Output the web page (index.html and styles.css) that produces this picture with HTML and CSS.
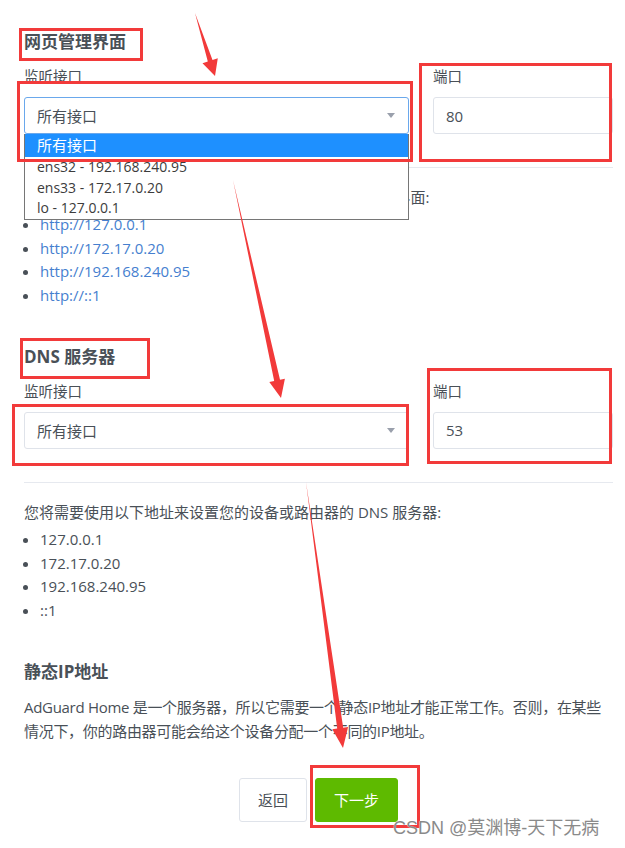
FILE: index.html
```html
<!DOCTYPE html>
<html>
<head>
	<meta charset="utf-8">
	<title>AdGuard Home 设置</title>
	<link rel="stylesheet" href="styles.css">
</head>
<body>
<div class="page">

	<section class="block">
		<h2>网页管理界面</h2>
		<div class="fields">
			<div class="field">
				<div class="label">监听接口</div>
				<div class="select-wrap">
					<div class="select focused"><span>所有接口</span><i class="caret"></i></div>
					<ul class="options">
						<li class="active">所有接口</li>
						<li>ens32 - 192.168.240.95</li>
						<li>ens33 - 172.17.0.20</li>
						<li>lo - 127.0.0.1</li>
					</ul>
				</div>
			</div>
			<div class="field">
				<div class="label">端口</div>
				<div class="input">80</div>
			</div>
		</div>
		<hr>
		<p>您可以通过以下地址来访问 AdGuard Home 的网页管理界面:</p>
		<ul class="addr links">
			<li><a href="javascript:;">http://127.0.0.1</a></li>
			<li><a href="javascript:;">http://172.17.0.20</a></li>
			<li><a href="javascript:;">http://192.168.240.95</a></li>
			<li><a href="javascript:;">http://::1</a></li>
		</ul>
	</section>

	<section class="block">
		<h2>DNS 服务器</h2>
		<div class="fields">
			<div class="field">
				<div class="label">监听接口</div>
				<div class="select"><span>所有接口</span><i class="caret"></i></div>
			</div>
			<div class="field">
				<div class="label">端口</div>
				<div class="input">53</div>
			</div>
		</div>
		<hr>
		<p>您将需要使用以下地址来设置您的设备或路由器的 DNS 服务器:</p>
		<ul class="addr">
			<li>127.0.0.1</li>
			<li>172.17.0.20</li>
			<li>192.168.240.95</li>
			<li>::1</li>
		</ul>
	</section>

	<section class="block">
		<h2>静态IP地址</h2>
		<p class="note">AdGuard Home 是一个服务器，所以它需要一个静态IP地址才能正常工作。否则，在某些<br>情况下，你的路由器可能会给这个设备分配一个不同的IP地址。</p>
	</section>

	<div class="actions">
		<button class="btn">返回</button>
		<button class="btn btn-green">下一步</button>
	</div>

	<!-- 截图上的红框和箭头标注 -->
	<svg class="marks" width="625" height="848" viewBox="0 0 625 848">
		<g fill="none" stroke="#f23a3a" stroke-width="3">
			<rect x="20.5" y="29.5" width="121" height="30"/>
			<rect x="18.5" y="82.5" width="393" height="78"/>
			<rect x="420.5" y="64.5" width="190" height="96"/>
			<rect x="21.5" y="339.5" width="127" height="38"/>
			<rect x="13.5" y="405.5" width="394" height="59"/>
			<rect x="428.5" y="369.5" width="182" height="93"/>
			<rect x="311.5" y="766.5" width="107" height="60"/>
		</g>
		<g fill="#f23a3a">
			<polygon points="195,13 207.8,61.5 202.5,63.2 215,76 217.8,58.3 212.5,60"/>
			<polygon points="233,180 274.2,381 269.3,382.1 281,398 284.9,378.7 280,379.8"/>
			<polygon points="306,482 337.2,728.6 332.3,729.3 343,748 348.1,727.1 343.2,727.8"/>
		</g>
	</svg>

	<div class="watermark">CSDN @莫渊博-天下无病</div>
</div>
</body>
</html>
```

FILE: styles.css
```css
*{ box-sizing: border-box; }
body{
	margin: 0;
	font-family: "Open Sans", "Noto Sans CJK SC", sans-serif;
	font-size: 15px;
	color: #495057;
	background: #fff;
}
.page{
	position: relative; /*标注层定位*/
	width: 625px; height: 848px;
	overflow: hidden;
	padding: 30px 12px 0 24px;
}
h2{
	margin: 0 0 11px;
	font-size: 17px; line-height: 24px;
	font-weight: 700;
}
.fields{
	display: grid;
	grid-template-columns: 385px 1fr;
	gap: 24px;
}
.label{
	font-size: 14.5px; line-height: 24px;
	margin-bottom: 8px;
}
.select, .input{
	display: flex; align-items: center;
	height: 37px;
	padding: 0 13px 0 12px;
	border: 1px solid #dfe3ea; border-radius: 3px;
	background: #fff;
}
.select{ justify-content: space-between; }
.select.focused{ border-color: #6aa8ec; }
.caret{
	width: 0; height: 0;
	border-left: 4px solid transparent;
	border-right: 4px solid transparent;
	border-top: 5px solid #9aa0ac;
}
.select-wrap{ position: relative; }
.options{
	position: absolute; z-index: 2;
	top: 37px; left: 0; right: 0;
	margin: 0; padding: 0;
	list-style: none;
	background: #fff;
	border: 1px solid #767676; border-top: 0;
}
.options li{
	padding: 0 12px;
	font-size: 14px;
	line-height: 20.5px;
	color: #3c3c3c;
}
.options .active{
	font-size: 15px;
	line-height: 23px;
	background: #1e90ff; color: #fff;
}
hr{
	border: 0; border-top: 1px solid #e6e9ef;
	margin: 33px 0 17px;
}
p{ margin: 0 0 4px; line-height: 24px; }
.addr{
	margin: 0 0 37px;
	padding-left: 16px;
	line-height: 23.7px;
}
.links a{ color: #467fcf; text-decoration: none; }
.note{
	margin-bottom: 35px;
	letter-spacing: -0.3px;
}
.actions{
	display: flex; justify-content: center;
	gap: 8px;
}
.btn{
	height: 44px;
	padding: 0 18px;
	font: inherit;
	color: #495057;
	background: #fff;
	border: 1px solid #dfe3ea; border-radius: 3px;
}
.btn-green{ background: #5eba00; border-color: #5eba00; color: #fff; }
.marks{
	position: absolute; z-index: 5;
	left: 0; top: 0;
}
.watermark{
	position: absolute; z-index: 6;
	left: 393px; top: 817px;
	font-family: "Liberation Sans", "Noto Sans CJK SC", sans-serif;
	font-size: 18px; line-height: 22px;
	color: #8a8a8a;
	text-shadow: 0 0 1px #fff;
}
```
